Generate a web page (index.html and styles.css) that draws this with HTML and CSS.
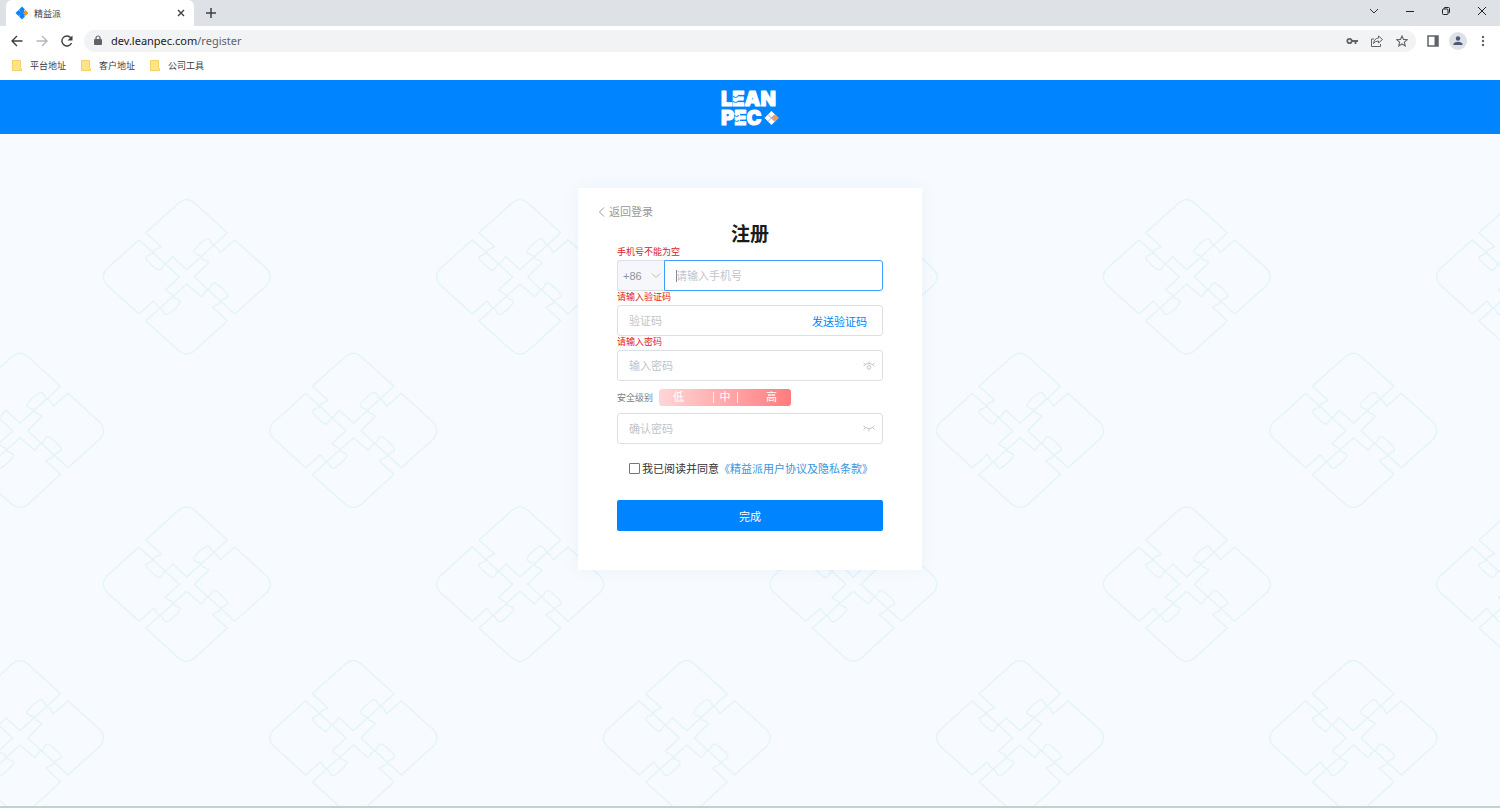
FILE: index.html
```
<!DOCTYPE html>
<html lang="zh-CN">
<head>
  <meta charset="UTF-8" />
  <meta name="viewport" content="width=device-width, initial-scale=1" />
  <title>精益派</title>
  <link rel="stylesheet" href="styles.css">
</head>
<body>
  <div class="tab-strip">
    <div class="tab">
      <svg class="favicon" width="14" height="14" viewBox="0 0 14 14">
        <path fill="#0a84ff" d="M7 .5l3 3-3 3-3-3zM3.500 4l3 3-3 3-3-3zM7 7.500l3 3-3 3-3-3z" />
        <path fill="#ff8f1f" d="M10.500 4l3 3-3 3-3-3z" />
        <path stroke="#0a84ff" stroke-width="1.500" d="M4.500 4.500l5 5M9 5L4.500 9.500" />
      </svg>
      <span class="tab-title">精益派</span>
      <button class="icon-btn" aria-label="关闭标签页">
        <svg width="8" height="8" viewBox="0 0 8 8" stroke="#3c4043" stroke-width="1.400"><path d="M1 1l6 6M7 1L1 7" /></svg>
      </button>
    </div>
    <button class="icon-btn new-tab" aria-label="新标签页">
      <svg width="10" height="10" viewBox="0 0 10 10" stroke="#3c4043" stroke-width="1.500"><path d="M5 0v10M0 5h10" /></svg>
    </button>
    <div class="window-controls">
      <button class="icon-btn" aria-label="搜索标签页">
        <svg width="10" height="10" viewBox="0 0 10 10" fill="none" stroke="#333"><path d="M1 3l4 4 4-4" /></svg>
      </button>
      <button class="icon-btn" aria-label="最小化">
        <svg width="10" height="10" viewBox="0 0 10 10" stroke="#222"><path d="M1 5.500h8" /></svg>
      </button>
      <button class="icon-btn" aria-label="还原">
        <svg width="10" height="10" viewBox="0 0 10 10" fill="none" stroke="#222"><rect x="1.500" y="3" width="5.500" height="5.500" rx="1" /><path d="M3 3V2.500q0-1 1-1h3.500q1 0 1 1V6q0 1-1 1" /></svg>
      </button>
      <button class="icon-btn" aria-label="关闭">
        <svg width="10" height="10" viewBox="0 0 10 10" stroke="#222"><path d="M1 1l8 8M9 1L1 9" /></svg>
      </button>
    </div>
  </div>

  <div class="toolbar">
    <button class="icon-btn" aria-label="后退">
      <svg width="12" height="12" viewBox="0 0 12 12" fill="none" stroke="#3c4043" stroke-width="1.400"><path d="M11.500 6H1.500M6 1L1 6l5 5" /></svg>
    </button>
    <button class="icon-btn" aria-label="前进">
      <svg width="12" height="12" viewBox="0 0 12 12" fill="none" stroke="#b4b7ba" stroke-width="1.400"><path d="M.5 6h10M6 1l5 5-5 5" /></svg>
    </button>
    <button class="icon-btn" aria-label="刷新">
      <svg width="12" height="12" viewBox="0 0 12 12"><path fill="none" stroke="#3c4043" stroke-width="1.400" d="M10.500 8A5 5 0 1 1 9.800 2.800" /><path fill="#3c4043" d="M11.500.5v5h-5z" /></svg>
    </button>
    <div class="omnibox">
      <svg width="8" height="11" viewBox="0 0 8 11"><rect y="4" width="8" height="6" rx="1" fill="#5f6368" /><path fill="none" stroke="#5f6368" stroke-width="1.200" d="M2 4.500V3a2 2 0 0 1 4 0v1.500" /></svg>
      <span class="url">dev.leanpec.com<span class="url-path">/register</span></span>
      <button class="icon-btn" aria-label="密码">
        <svg width="12" height="12" viewBox="0 0 12 12"><circle cx="3.500" cy="6" r="2.200" fill="none" stroke="#5f6368" stroke-width="1.800" /><path fill="none" stroke="#5f6368" stroke-width="1.800" d="M6 6h6M9.500 6v3" /></svg>
      </button>
      <button class="icon-btn" aria-label="分享">
        <svg width="12" height="12" viewBox="0 0 12 12" fill="none" stroke="#5f6368"><path d="M3 4H.5v7.500h9V9M7.500 1l4 3.500-4 3.500V6Q4 6 2.500 8.500 3 3.500 7.500 3z" stroke-linejoin="round" /></svg>
      </button>
      <button class="icon-btn" aria-label="收藏">
        <svg width="12" height="12" viewBox="0 0 12 12" fill="none" stroke="#5f6368" stroke-width="1.100"><path d="M6 1l1.500 3.400 3.700.4-2.800 2.400.8 3.700L6 9l-3.200 1.900.8-3.700L.8 4.800l3.700-.4z" /></svg>
      </button>
    </div>
    <button class="icon-btn" aria-label="侧边栏">
      <svg width="12" height="12" viewBox="0 0 12 12"><rect x="1" y="1" width="10" height="10" fill="none" stroke="#5f6368" stroke-width="1.500" /><path fill="#5f6368" d="M7.500 1H11v10H7.500z" /></svg>
    </button>
    <button class="icon-btn avatar" aria-label="用户">
      <svg width="10" height="10" viewBox="0 0 10 10" fill="#4a5a73"><circle cx="5" cy="2.500" r="2.200" /><path d="M.5 9V7.500Q2 5.800 5 5.800t4.500 1.700V9z" /></svg>
    </button>
    <button class="icon-btn" aria-label="菜单">
      <svg width="12" height="12" viewBox="0 0 12 12" fill="#5f6368"><circle cx="6" cy="2" r="1.200" /><circle cx="6" cy="6" r="1.200" /><circle cx="6" cy="10" r="1.200" /></svg>
    </button>
  </div>

  <nav class="bookmarks">
    <a href="#"><svg width="10" height="11" viewBox="0 0 10 11"><path fill="#ffe389" stroke="#efc94f" stroke-width=".8" d="M.5.5h8v7l1 1v2h-9z" /></svg>平台地址</a>
    <a href="#"><svg width="10" height="11" viewBox="0 0 10 11"><path fill="#ffe389" stroke="#efc94f" stroke-width=".8" d="M.5.5h8v7l1 1v2h-9z" /></svg>客户地址</a>
    <a href="#"><svg width="10" height="11" viewBox="0 0 10 11"><path fill="#ffe389" stroke="#efc94f" stroke-width=".8" d="M.5.5h8v7l1 1v2h-9z" /></svg>公司工具</a>
  </nav>

  <header class="site-header">
    <svg class="logo" width="60" height="54" viewBox="0 0 60 54" role="img" aria-label="LEAN PEC">
      <text x="1" y="26">LEAN</text>
      <text x="1" y="45">PEC</text>
      <path class="logo-cut" d="M13 16.500q3 2 5 0M13 21.500q3 2 5 0M14 35.500q3 2 5 0M14 40.500q3 2 5 0" />
      <path fill="#fff" d="M51.500 31l7 7-7 7-7-7z" />
      <path fill="#ff9a3c" d="M55 34.500l3.500 3.500-3.500 3.500-3.500-3.500z" />
      <path fill="none" stroke="#8b8fd8" stroke-width=".8" d="M48 34.500l7 7M55 34.500l-7 7" />
    </svg>
  </header>

  <main class="page">
    <form class="card">
      <a class="back" href="#">
        <svg width="7" height="10" viewBox="0 0 7 10" fill="none" stroke="#999"><path d="M6 .5L1.500 5 6 9.500" /></svg>
        返回登录
      </a>
      <h1>注册</h1>

      <div class="fields">
        <label class="error" for="phone">手机号不能为空</label>
        <div class="phone">
          <div class="area">
            <select aria-label="区号"><option>+86</option></select>
            <svg width="10" height="6" viewBox="0 0 10 6" fill="none" stroke="#b4b8bf"><path d="M1 .5l4 4 4-4" /></svg>
          </div>
          <input class="active" id="phone" type="tel" placeholder="请输入手机号">
        </div>

        <label class="error" for="code">请输入验证码</label>
        <div class="box">
          <input id="code" type="text" placeholder="验证码">
          <button class="send" type="button">发送验证码</button>
        </div>

        <label class="error" for="password">请输入密码</label>
        <div class="box">
          <input id="password" type="password" placeholder="输入密码">
          <button class="eye" type="button" aria-label="显示密码">
            <svg width="12" height="10" viewBox="0 0 12 10" fill="none" stroke="#bfc3ca"><circle cx="6" cy="6.500" r="1.800" /><path d="M.5 5Q6 0 11.500 5M6 2.500V.5M2.500 3.500L.5 2M9.500 3.500l2-1.500" /></svg>
          </button>
        </div>

        <div class="strength">
          <span>安全级别</span>
          <div class="levels"><span>低</span><span>中</span><span>高</span></div>
        </div>

        <div class="box">
          <input id="confirm" type="password" placeholder="确认密码" aria-label="确认密码">
          <button class="eye" type="button" aria-label="显示密码">
            <svg width="12" height="10" viewBox="0 0 12 10" fill="none" stroke="#bfc3ca"><path d="M.5 2Q6 7 11.500 2M6 4.500v3M2.500 3.500L.5 5.500M9.500 3.500l2 2" /></svg>
          </button>
        </div>

        <div class="agree">
          <input id="agree" type="checkbox">
          <label for="agree">我已阅读并同意</label>
          <a href="#">《精益派用户协议及隐私条款》</a>
        </div>

        <button class="submit" type="submit">完成</button>
      </div>
    </form>
  </main>
</body>
</html>
```

FILE: styles.css
```
* {
  margin: 0;
  padding: 0;
  box-sizing: border-box;
}

body {
  font-family: "Liberation Sans", "Noto Sans CJK SC", sans-serif;
  font-size: 11px;
  color: #333;
  min-height: 100vh;
  display: flex;
  flex-direction: column;
}

a {
  text-decoration: none;
}

button,
input,
select {
  font: inherit;
  border: none;
  background: none;
}

button {
  cursor: pointer;
}

svg {
  display: block;
  flex: none;
}

/* Browser frame */
.tab-strip {
  display: flex;
  align-items: center;
  height: 26px;
  padding-left: 6px;
  background: #dee1e6;
}

.tab {
  display: flex;
  align-items: center;
  gap: 5px;
  width: 188px;
  height: 26px;
  padding: 0 4px 0 9px;
  background: #fff;
  border-radius: 6px 6px 0 0;
}

.tab-title {
  flex: 1;
  font-size: 9px;
  color: #3c4043;
}

.icon-btn {
  display: flex;
  align-items: center;
  justify-content: center;
  width: 18px;
  height: 18px;
}

.new-tab {
  margin-left: 8px;
}

.window-controls {
  display: flex;
  align-items: center;
  height: 22px;
  margin: 0 9px auto auto;
  gap: 18px;
}

.toolbar {
  display: flex;
  align-items: center;
  gap: 7px;
  height: 29px;
  padding: 0 8px;
}

.omnibox {
  flex: 1;
  display: flex;
  align-items: center;
  gap: 7px;
  height: 22px;
  padding: 0 5px 0 10px;
  margin: 0 1px;
  background: #f1f3f4;
  border-radius: 11px;
}

.url {
  flex: 1;
  padding-left: 2px;
  font-family: "Noto Sans", "Noto Sans CJK SC", sans-serif;
  color: #202124;
}

.url-path {
  color: #5f6368;
}

.avatar {
  background: #dee1e6;
  border-radius: 50%;
}

.bookmarks {
  display: flex;
  gap: 15px;
  height: 25px;
  padding: 0 12px;
}

.bookmarks a {
  display: flex;
  align-items: center;
  height: 21px;
  gap: 8px;
  font-size: 9px;
  color: #3c4043;
}

/* Site */
.site-header {
  display: flex;
  align-items: center;
  justify-content: center;
  height: 54px;
  background: #0084ff;
}

.logo text {
  font-family: Inter, sans-serif;
  font-size: 20px;
  font-weight: 900;
  fill: #fff;
  stroke: #fff;
  stroke-width: 1;
  stroke-linejoin: round;
}

.logo-cut {
  fill: none;
  stroke: #0084ff;
  stroke-width: 1;
}

.page {
  flex: 1;
  padding: 54px 16px 16px;
  border-bottom: 2px solid #bfd3d3;
  background: #f7fbff url("data:image/svg+xml,%3Csvg xmlns='http://www.w3.org/2000/svg' width='1000' height='615' viewBox='0 0 3000 1845'%3E%3Cdefs%3E%3Cg id='m' fill='none' stroke='%23e2f3f9' stroke-width='4' stroke-linejoin='round'%3E%3Cpath d='M-123 -133L-24 -222Q0 -243 24 -222L122 -133L0 -22L-42 -61C-53 -56 -50 -41 -65 -41C-71 -38 -73 -21 -81 -20C-90 -20 -122 -50 -123 -58C-122 -67 -102 -66 -99 -74C-102 -84 -84 -84 -76 -91Z'/%3E%3Cpath d='M144 -112L241 -24Q261 0 241 24L144 111L23 0L66 -43C60 -53 44 -48 44 -61C41 -66 22 -67 21 -75C20 -84 54 -115 63 -115C73 -115 73 -98 82 -94C92 -94 92 -82 100 -73Z'/%3E%3Cpath d='M122 131L24 221Q0 241 -24 221L-123 132L0 21L44 59C54 55 51 40 65 38C72 37 72 18 83 18C91 18 123 48 124 56C123 65 103 66 102 74C102 82 86 82 78 91Z'/%3E%3Cpath d='M-143 111L-240 23Q-261 0 -240 -24L-143 -112L-22 0L-64 39C-59 49 -42 46 -41 59C-41 65 -19 66 -19 74C-20 82 -52 113 -61 113C-72 112 -71 94 -81 92C-92 91 -90 77 -99 72Z'/%3E%3C/g%3E%3Cpattern id='p' width='1000' height='1845' patternUnits='userSpaceOnUse'%3E%3Cuse href='%23m' x='560' y='249'/%3E%3Cuse href='%23m' x='60' y='710'/%3E%3Cuse href='%23m' x='1060' y='710'/%3E%3Cuse href='%23m' x='560' y='1171'/%3E%3Cuse href='%23m' x='60' y='1632'/%3E%3Cuse href='%23m' x='1060' y='1632'/%3E%3C/pattern%3E%3C/defs%3E%3Crect width='3000' height='1845' fill='url(%23p)'/%3E%3C/svg%3E") 0 60px repeat-x;
}

.card {
  width: 100%;
  max-width: 344px;
  margin: 0 auto;
  padding: 16px 0 39px;
  background: #fff;
  box-shadow: 0 0 16px rgba(0, 80, 160, 0.06);
}

.back {
  display: flex;
  align-items: center;
  gap: 4px;
  width: max-content;
  margin-left: 20px;
  line-height: 16px;
  color: #999;
}

h1 {
  padding-top: 3px;
  font-size: 19px;
  line-height: 23px;
  text-align: center;
  color: #1a1a1a;
}

.fields {
  padding: 0 39px;
}

.error {
  display: block;
  padding-bottom: 2px;
  font-size: 9px;
  line-height: 12px;
  color: #e02020;
}

.phone,
.box {
  display: flex;
  height: 31px;
}

.box {
  align-items: center;
  padding-right: 7px;
  border: 1px solid #dcdfe6;
  border-radius: 3px;
}

.phone input,
.box input {
  flex: 1;
  min-width: 0;
  height: 100%;
  padding: 0 11px;
  outline: none;
}

input::placeholder {
  color: #bfc4cc;
}

.phone .active {
  border: 1px solid #409eff;
  border-radius: 0 3px 3px 0;
  background: linear-gradient(#888, #888) 11px center / 1px 12px no-repeat;
}

.area {
  display: flex;
  align-items: center;
  width: 47px;
  padding: 0 3px 0 5px;
  background: #f5f7fa;
  border: 1px solid #dcdfe6;
  border-right: none;
  border-radius: 3px 0 0 3px;
}

.area select {
  flex: 1;
  min-width: 0;
  appearance: none;
  color: #909399;
}

.send {
  padding: 0 8px;
  color: #0084ff;
}

.strength {
  display: flex;
  align-items: center;
  gap: 6px;
  height: 32px;
  font-size: 9px;
  color: #808080;
}

.levels {
  display: flex;
  align-items: center;
  width: 132px;
  height: 17px;
  font-size: 11px;
  color: #fff;
  background: linear-gradient(90deg, #ffd6d8, #ff7c7c);
  border-radius: 3px;
}

.levels span {
  flex: 1;
  line-height: 11px;
  padding: 0 14px;
}

.levels span:nth-child(2) {
  flex: none;
  padding: 0 6px;
  border: 1px solid rgba(255, 255, 255, 0.7);
  border-width: 0 1px;
}

.levels span:last-child {
  text-align: right;
}

.agree {
  display: flex;
  align-items: center;
  height: 16px;
  margin: 16px 0 24px 12px;
  white-space: nowrap;
}

.agree input {
  appearance: none;
  width: 11px;
  height: 11px;
  margin-right: 2px;
  border: 1px solid #767676;
  border-radius: 1px;
}

.agree a {
  color: #3a96dc;
}

.submit {
  display: block;
  width: 100%;
  height: 31px;
  color: #fff;
  background: #0084ff;
  border-radius: 2px;
}
```
